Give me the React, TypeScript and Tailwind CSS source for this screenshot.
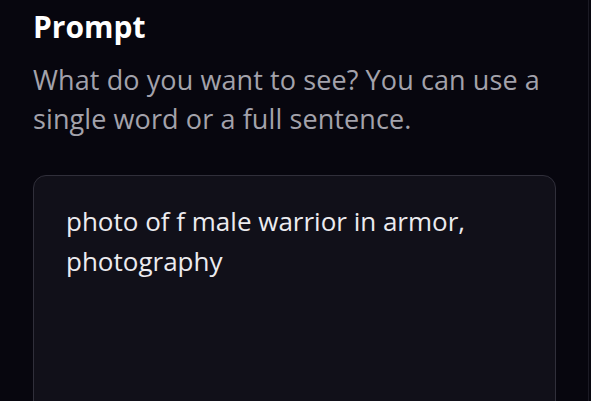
import React from 'react';

const App: React.FC = () => {
  return (
    <div className="h-[401px] w-[591px] overflow-hidden bg-[#07060e] font-['Open_Sans',sans-serif]">
      <div className="h-full w-[589px] border-r border-[#1b1a24]">
        <div className="w-[556px] pl-[33px] pt-[7px]">
          <h2 className="text-[30px] font-bold leading-[40px] text-white">Prompt</h2>
          <p className="mt-[13px] text-[27px] leading-[39px] tracking-[0.1px] text-[#a3a2ab]">
            What do you want to see? You can use a single word or a full sentence.
          </p>
          <div className="mt-[37px] h-[300px] rounded-[13px] border border-[#302f3a] bg-[#111019] px-[32px] pt-[25px]">
            <p className="text-[26px] leading-[40px] text-[#ecebef]">
              photo of f male warrior in armor, photography
            </p>
          </div>
        </div>
      </div>
    </div>
  );
};

export default App;
